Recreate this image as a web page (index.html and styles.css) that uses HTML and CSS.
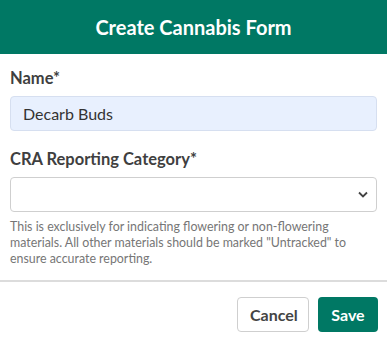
FILE: index.html
```html
<!DOCTYPE html>
<html lang="en">
<head>
    <meta charset="UTF-8">
    <meta name="viewport" content="width=device-width, initial-scale=1.0">
    <title>Create Cannabis Form</title>
    <link rel="stylesheet" href="styles.css">
</head>
<body>

    <!-- Modal -->
    <div class="modal">
        <div class="modal-header">
            <h2>Create Cannabis Form</h2>
        </div>

        <div class="modal-body">
            <label for="name">Name*</label>
            <input type="text" id="name" class="field filled" value="Decarb Buds">

            <label for="category">CRA Reporting Category*</label>
            <select id="category" class="field">
                <option value=""></option>
                <option value="flowering">Flowering</option>
                <option value="non-flowering">Non-flowering</option>
                <option value="untracked">Untracked</option>
            </select>
            <p class="help">This is exclusively for indicating flowering or non-flowering materials. All other materials should be marked "Untracked" to ensure accurate reporting.</p>
        </div>

        <div class="modal-footer">
            <button class="btn btn-cancel">Cancel</button>
            <button class="btn btn-save">Save</button>
        </div>
    </div>

</body>
</html>
```

FILE: styles.css
```css
body {
    font-family: Lato, "Open Sans", sans-serif;
    background-color: white;
    margin: 0;
    color: #3f3f3f;
}
.modal {
    width: 387px;
}
.modal-header {
    background-color: #007864;
    height: 54px;
    display: flex;
    align-items: center;
    justify-content: center;
}
.modal-header h2 {
    margin: 0;
    color: white;
    font-size: 20px;
    font-weight: bold;
}
.modal-body {
    padding: 14px 10px 0;
}
label {
    display: block;
    font-size: 16.5px;
    font-weight: bold;
    margin: 0 0 8px;
    line-height: 20px;
}
.field {
    display: block;
    width: 100%;
    height: 35px;
    box-sizing: border-box;
    border: 1px solid #cfcfcf;
    border-radius: 4px;
    font-family: inherit;
    font-size: 16px;
    color: #333;
    background-color: white;
    margin: 0 0 18px;
}
input.field {
    padding: 0 12px;
}
.field.filled {
    background-color: #e8f0fe;
    border-color: #d6dff0;
}
select.field {
    appearance: none;
    -webkit-appearance: none;
    padding: 0 30px 0 12px;
    margin-bottom: 7px;
    background-image: url("data:image/svg+xml;utf8,<svg xmlns='http://www.w3.org/2000/svg' width='10' height='7' viewBox='0 0 10 7'><path d='M1 1.5 L5 5.5 L9 1.5' fill='none' stroke='%23444' stroke-width='1.8'/></svg>");
    background-repeat: no-repeat;
    background-position: right 8px center;
}
p.help {
    font-size: 12.4px;
    line-height: 16px;
    color: #767676;
    margin: 0 0 13px;
}
.modal-footer {
    border-top: 2px solid #dcdcdc;
    display: flex;
    justify-content: flex-end;
    gap: 9px;
    padding: 15px 9px 0 10px;
}
.btn {
    height: 35px;
    font-family: inherit;
    font-size: 16px;
    font-weight: bold;
    border-radius: 4px;
    cursor: pointer;
    padding: 0 12px;
}
.btn-cancel {
    background-color: white;
    color: #444;
    border: 1px solid #cfcfcf;
    width: 72px;
}
.btn-save {
    background-color: #007864;
    color: white;
    border: none;
    width: 60px;
}
.btn-save:hover {
    background-color: #005f4f;
}
```
